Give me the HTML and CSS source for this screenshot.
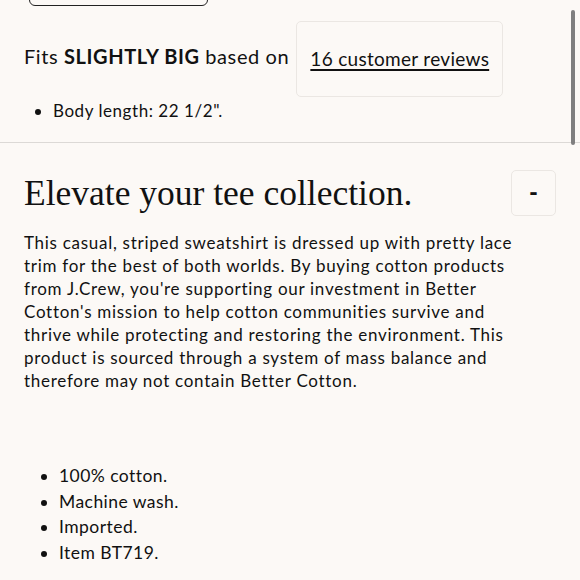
FILE: index.html
```html
<!DOCTYPE html>
<html>
<head>
<meta charset="utf-8">
<link rel="stylesheet" href="styles.css">
</head>
<body>
<div class="page">
  <div class="top-btn"></div>
  <section class="fit">
    <div class="fit-row">
      <p class="fit-text">Fits <b>SLIGHTLY BIG</b> based on</p>
      <div class="review-box"><a class="review-link" href="#">16 customer reviews</a></div>
    </div>
    <ul class="spec-list">
      <li>Body length: 22 1/2".</li>
    </ul>
  </section>
  <hr class="divider">
  <section class="details">
    <div class="details-head">
      <h2 class="title">Elevate your tee collection.</h2>
      <button class="toggle">-</button>
    </div>
    <p class="desc">This casual, striped sweatshirt is dressed up with pretty lace trim for the best of both worlds. By buying cotton products from J.Crew, you're supporting our investment in Better Cotton's mission to help cotton communities survive and thrive while protecting and restoring the environment. This product is sourced through a system of mass balance and therefore may not contain Better Cotton.</p>
    <ul class="feature-list">
      <li>100% cotton.</li>
      <li>Machine wash.</li>
      <li>Imported.</li>
      <li>Item BT719.</li>
    </ul>
  </section>
  <div class="scrollbar"></div>
</div>
</body>
</html>
```
FILE: styles.css
```css
* { box-sizing: border-box; }
html, body { margin: 0; padding: 0; }
body {
  background: #fcf9f6;
  font-family: Lato, "Noto Sans", sans-serif;
  color: #111;
  width: 580px;
  height: 580px;
  overflow: hidden;
}
.page { position: relative; height: 580px; }
.top-btn {
  margin: -40px 0 0 29px;
  width: 179px;
  height: 46px;
  border: 1.5px solid #222;
  border-radius: 6px;
}
.fit { padding: 0 0 0 24px; }
.fit-row {
  display: flex;
  align-items: center;
  gap: 7px;
  margin-top: 15px;
}
.fit-text {
  margin: 0 0 6px;
  font-size: 20px;
  letter-spacing: 0.6px;
}
.fit-text b { font-weight: 700; }
.review-box {
  width: 207px;
  height: 76px;
  border: 1px solid #ebe7e3;
  border-radius: 5px;
  display: flex;
  align-items: center;
  justify-content: center;
  padding-bottom: 1px;
}
.review-link {
  color: #111;
  font-size: 19px;
  letter-spacing: 0.3px;
  text-decoration: underline;
  text-underline-offset: 3px;
  text-decoration-thickness: 1.5px;
}
.spec-list {
  margin: 2px 0 0;
  padding-left: 29px;
  font-size: 17px;
  line-height: 24px;
  letter-spacing: 0.55px;
}
.divider { margin: 19px 0 0; border: 0; border-top: 1.5px solid #dcd9d6; }
.details { padding: 0 24px; }
.details-head {
  display: flex;
  justify-content: space-between;
  align-items: center;
  margin-top: 27px;
}
.title {
  margin: 0;
  font-family: "Liberation Serif", "Times New Roman", serif;
  font-weight: 400;
  font-size: 35.5px;
}
.toggle {
  width: 45px;
  height: 46px;
  border: 1px solid #ebe7e3;
  border-radius: 5px;
  background: transparent;
  font-size: 24px;
  font-weight: 900;
  font-family: Lato, sans-serif;
  color: #111;
  padding: 0 0 4px;
}
.desc {
  margin: 15px 0 0;
  font-size: 17px;
  line-height: 23px;
  letter-spacing: 0.72px;
  width: 505px;
}
.feature-list {
  margin: 71px 0 0;
  padding-left: 35px;
  font-size: 17.5px;
  line-height: 25.7px;
  letter-spacing: 0.45px;
}
.scrollbar {
  position: absolute;
  right: 5px;
  top: 50px;
  width: 4px;
  height: 135px;
  border-radius: 2px;
  background: #7f7f7f;
}
```
